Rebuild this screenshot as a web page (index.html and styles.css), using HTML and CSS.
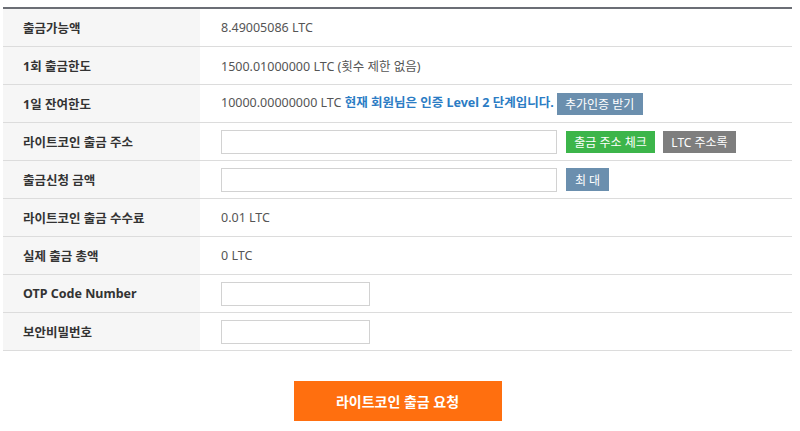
FILE: index.html
```html
<!DOCTYPE html>
<html lang="ko">
<head>
    <meta charset="UTF-8">
    <meta name="viewport" content="width=device-width, initial-scale=1.0">
    <title>라이트코인 출금</title>
    <link rel="stylesheet" href="styles.css">
</head>
<body>
    <div class="wrap">
        <table class="withdraw">
            <tr>
                <th>출금가능액</th>
                <td>8.49005086 LTC</td>
            </tr>
            <tr>
                <th>1회 출금한도</th>
                <td>1500.01000000 LTC (횟수 제한 없음)</td>
            </tr>
            <tr>
                <th>1일 잔여한도</th>
                <td>10000.00000000 LTC <span class="notice">현재 회원님은 인증 Level 2 단계입니다.</span><button class="btn btn-blue btn-auth">추가인증 받기</button></td>
            </tr>
            <tr>
                <th>라이트코인 출금 주소</th>
                <td><input type="text" class="field field-wide"><button class="btn btn-green">출금 주소 체크</button><button class="btn btn-gray">LTC 주소록</button></td>
            </tr>
            <tr>
                <th>출금신청 금액</th>
                <td><input type="text" class="field field-wide"><button class="btn btn-blue btn-max">최 대</button></td>
            </tr>
            <tr>
                <th>라이트코인 출금 수수료</th>
                <td>0.01 LTC</td>
            </tr>
            <tr>
                <th>실제 출금 총액</th>
                <td>0 LTC</td>
            </tr>
            <tr>
                <th>OTP Code Number</th>
                <td><input type="text" class="field field-short"></td>
            </tr>
            <tr>
                <th>보안비밀번호</th>
                <td><input type="password" class="field field-short"></td>
            </tr>
        </table>

        <div class="actions">
            <button class="submit">라이트코인 출금 요청</button>
        </div>
    </div>
</body>
</html>
```

FILE: styles.css
```css
body {
    margin: 0;
    font-family: 'Noto Sans', 'Noto Sans CJK KR', sans-serif;
    font-size: 12.5px;
    color: #444;
    background-color: #fff;
}
.wrap {
    width: 789px;
    padding: 7px 0 0 3px;
}
.withdraw {
    width: 100%;
    border-collapse: collapse;
    border-top: 2px solid #6b6e75;
}
.withdraw th,
.withdraw td {
    height: 37px;
    padding: 0;
    border-bottom: 1px solid #dcdcdc;
    text-align: left;
    vertical-align: middle;
    white-space: nowrap;
}
.withdraw th {
    width: 177px;
    padding-left: 20px;
    background-color: #f6f6f6;
    color: #333;
    font-weight: bold;
}
.withdraw td {
    padding-left: 21px;
    color: #555;
}
.notice {
    color: #2b7cc4;
    font-weight: bold;
}
.field {
    box-sizing: border-box;
    height: 24px;
    margin: 0;
    padding: 0 6px;
    border: 1px solid #d2d2d2;
    vertical-align: middle;
}
.field-wide {
    width: 336px;
}
.field-short {
    width: 149px;
}
.btn {
    height: 22px;
    padding: 0;
    border: none;
    color: #fff;
    font-family: inherit;
    font-size: 12px;
    white-space: nowrap;
    vertical-align: middle;
    cursor: pointer;
}
.btn-blue {
    background-color: #6b8fae;
}
.btn-auth {
    margin-left: 3px;
    width: 86px;
}
.btn-green {
    margin-left: 9px;
    width: 89px;
    background-color: #3cb54a;
}
.btn-gray {
    margin-left: 8px;
    width: 73px;
    background-color: #7e7e7e;
}
.btn-max {
    margin-left: 9px;
    width: 43px;
    height: 23px;
}
.actions {
    padding-top: 30px;
    text-align: center;
}
.submit {
    width: 208px;
    height: 40px;
    border: none;
    background-color: #ff6f0f;
    color: #fff;
    font-family: inherit;
    font-size: 14px;
    font-weight: bold;
    cursor: pointer;
}
```
